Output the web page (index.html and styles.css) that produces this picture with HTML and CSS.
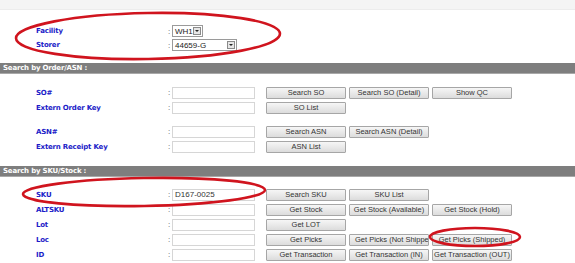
FILE: index.html
```html
<!DOCTYPE html>
<html lang="en">
<head>
  <meta charset="UTF-8">
  <title>Inquiry</title>
  <link rel="stylesheet" href="styles.css">
</head>
<body>
  <div class="topbar"></div>

  <!-- Facility / Storer -->
  <div class="owner">
    <div class="row row-short">
      <span class="label">Facility</span>
      <span class="field"><span class="colon">:</span><span class="select select-wh">WH1<i class="arrow"></i></span></span>
    </div>
    <div class="row row-short">
      <span class="label">Storer</span>
      <span class="field"><span class="colon">:</span><span class="select select-storer">44659-G<i class="arrow"></i></span></span>
    </div>
  </div>

  <div class="section-title">Search by Order/ASN :</div>
  <div class="group group-first">
    <div class="row">
      <span class="label">SO#</span>
      <span class="field"><span class="colon">:</span><input type="text"></span>
      <span class="buttons"><button>Search SO</button><button>Search SO (Detail)</button><button>Show QC</button></span>
    </div>
    <div class="row">
      <span class="label">Extern Order Key</span>
      <span class="field"><span class="colon">:</span><input type="text"></span>
      <span class="buttons"><button>SO List</button></span>
    </div>
  </div>
  <div class="group group-second">
    <div class="row">
      <span class="label">ASN#</span>
      <span class="field"><span class="colon">:</span><input type="text"></span>
      <span class="buttons"><button>Search ASN</button><button>Search ASN (Detail)</button></span>
    </div>
    <div class="row">
      <span class="label">Extern Receipt Key</span>
      <span class="field"><span class="colon">:</span><input type="text"></span>
      <span class="buttons"><button>ASN List</button></span>
    </div>
  </div>

  <div class="section-title">Search by SKU/Stock :</div>
  <div class="group group-sku">
    <div class="row">
      <span class="label">SKU</span>
      <span class="field"><span class="colon">:</span><input type="text" value="D167-0025"></span>
      <span class="buttons"><button>Search SKU</button><button>SKU List</button></span>
    </div>
    <div class="row">
      <span class="label">ALTSKU</span>
      <span class="field"><span class="colon">:</span><input type="text"></span>
      <span class="buttons"><button>Get Stock</button><button>Get Stock (Available)</button><button>Get Stock (Hold)</button></span>
    </div>
    <div class="row">
      <span class="label">Lot</span>
      <span class="field"><span class="colon">:</span><input type="text"></span>
      <span class="buttons"><button>Get LOT</button></span>
    </div>
    <div class="row">
      <span class="label">Loc</span>
      <span class="field"><span class="colon">:</span><input type="text"></span>
      <span class="buttons"><button>Get Picks</button><button class="clip">Get Picks (Not Shipped)</button><button>Get Picks (Shipped)</button></span>
    </div>
    <div class="row">
      <span class="label">ID</span>
      <span class="field"><span class="colon">:</span><input type="text"></span>
      <span class="buttons"><button>Get Transaction</button><button>Get Transaction (IN)</button><button>Get Transaction (OUT)</button></span>
    </div>
  </div>

  <!-- red hand-drawn annotations over the screenshot -->
  <svg class="marks" width="575" height="263" viewBox="0 0 575 263">
    <ellipse cx="148" cy="36" rx="132" ry="23" transform="rotate(-1 148 36)"/>
    <ellipse cx="144" cy="192" rx="121" ry="14" transform="rotate(-1 144 192)"/>
    <ellipse cx="475" cy="237" rx="45" ry="9"/>
  </svg>
</body>
</html>
```

FILE: styles.css
```css
body {
  margin: 0;
  background: #ffffff;
  font-family: "DejaVu Sans", Verdana, sans-serif;
  position: relative;
  width: 575px;
  height: 263px;
  overflow: hidden;
}

.topbar {
  height: 9px;
  background: #f4f4f4;
  border-bottom: 1px solid #ececec;
}

.owner {
  padding-top: 14px;
  padding-bottom: 11px;
}

/* label / colon+input / buttons */
.row {
  display: grid;
  grid-template-columns: 132px 98px 1fr;
  align-items: center;
  height: 15px;
  padding-left: 36px;
}

.row-short {
  height: 14px;
}

.label {
  color: #1c1cc8;
  font-weight: bold;
  font-size: 7px;
  letter-spacing: -0.2px;
}

.field {
  display: flex;
  align-items: center;
}

.colon {
  width: 4px;
  font-size: 8px;
  color: #555;
  font-family: "Liberation Sans", Arial, sans-serif;
}

input {
  width: 83px;
  height: 12px;
  box-sizing: border-box;
  margin: 0;
  padding: 0 2px;
  border: 1px solid #d6d6d6;
  background: #fff;
  font-family: "Liberation Sans", Arial, sans-serif;
  font-size: 8px;
  color: #333;
}

.select {
  display: flex;
  align-items: center;
  justify-content: space-between;
  height: 12px;
  box-sizing: border-box;
  border: 1px solid #9a9a9a;
  padding: 0 1px 0 2px;
  font-family: "Liberation Sans", Arial, sans-serif;
  font-size: 8px;
  color: #222;
}

.select-wh {
  width: 31px;
}

.select-storer {
  width: 65px;
}

.arrow {
  width: 8px;
  height: 8px;
  box-sizing: border-box;
  border: 1px solid #8a8a8a;
  background: #e6e6e6;
  position: relative;
}

.arrow::after {
  content: "";
  position: absolute;
  left: 1px;
  top: 2px;
  border-left: 2px solid transparent;
  border-right: 2px solid transparent;
  border-top: 2px solid #222;
}

.section-title {
  height: 10px;
  line-height: 10px;
  background: #7e7e7e;
  border-bottom: 1px solid #a8a8a8;
  color: #ffffff;
  font-weight: bold;
  font-size: 7px;
  letter-spacing: -0.2px;
  padding-left: 3px;
}

.group-first {
  padding-top: 11px;
}

.group-second {
  padding-top: 9px;
  padding-bottom: 12px;
}

.group-sku {
  padding-top: 10px;
}

.buttons {
  display: flex;
  gap: 3px;
}

button {
  width: 80px;
  height: 12px;
  margin: 0;
  padding: 0;
  border: 1px solid #a6a6a6;
  border-radius: 1px;
  background: linear-gradient(#f6f6f6, #dcdcdc);
  font-family: "Liberation Sans", Arial, sans-serif;
  font-size: 7.5px;
  color: #333;
  white-space: nowrap;
  overflow: hidden;
}

.clip {
  text-align: left;
  padding-left: 5px;
}

.marks {
  position: absolute;
  left: 0;
  top: 0;
  pointer-events: none;
}

.marks ellipse {
  fill: none;
  stroke: #d0141e;
  stroke-width: 2.6;
}
```
